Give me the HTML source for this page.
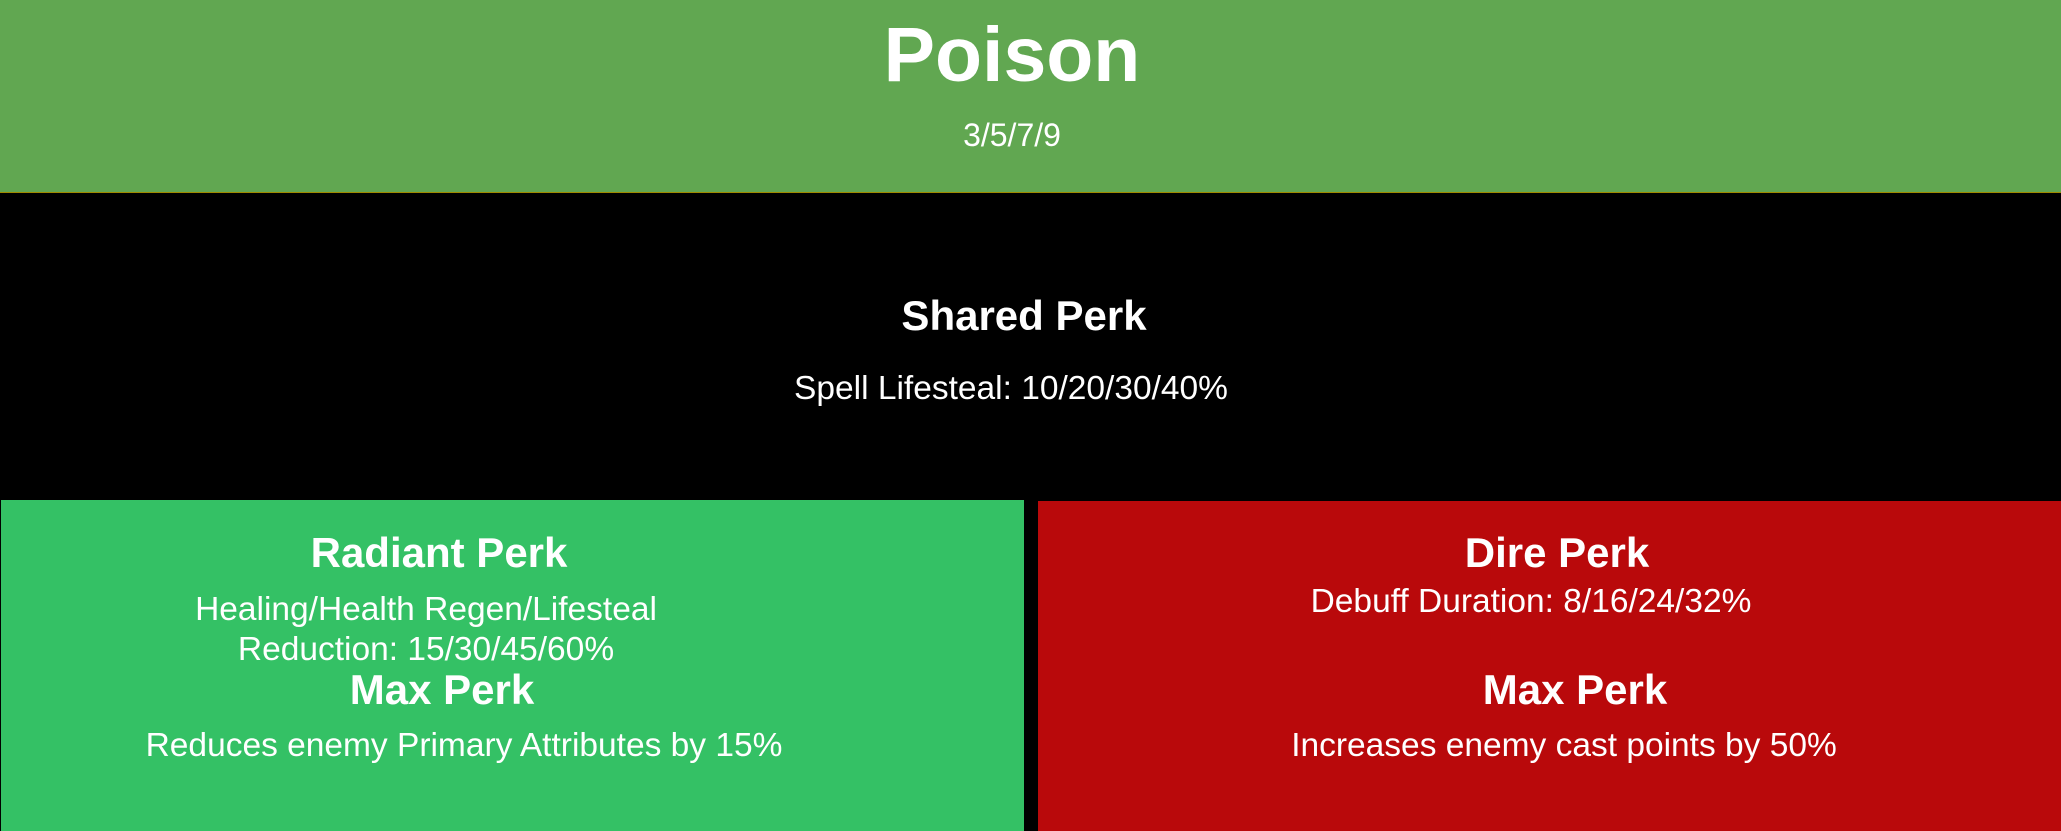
<!DOCTYPE html>
<html><head><meta charset="utf-8"><style>
html,body{margin:0;padding:0;width:2061px;height:831px;overflow:hidden;background:#000;font-family:"Liberation Sans",Arial,sans-serif;color:#fff}
.hdr{position:absolute;left:0;top:0;width:2061px;height:192px;background:#61a751;border-bottom:1px solid #a08a00}
.g{position:absolute;left:1px;top:500px;width:1023px;height:331px;background:#34c165}
.r{position:absolute;left:1038px;top:501px;width:1023px;height:330px;background:#b9090b}
.t{position:absolute;white-space:nowrap;transform:translateX(-50%);line-height:1.149}
.b{font-weight:bold}
</style></head><body>
<div class="hdr"></div>
<div class="g"></div>
<div class="r"></div>
<div class="t b" style="left:1012px;top:11px;font-size:77px">Poison</div>
<div class="t" style="left:1012px;top:117px;font-size:32px">3/5/7/9</div>
<div class="t b" style="left:1024px;top:292px;font-size:42px">Shared Perk</div>
<div class="t" style="left:1011px;top:370px;font-size:33.5px">Spell Lifesteal: 10/20/30/40%</div>

<div class="t b" style="left:439px;top:529px;font-size:42px">Radiant Perk</div>
<div class="t" style="left:426px;top:591px;font-size:33.5px">Healing/Health Regen/Lifesteal</div>
<div class="t" style="left:426px;top:631px;font-size:33.5px">Reduction: 15/30/45/60%</div>
<div class="t b" style="left:442px;top:666px;font-size:42px">Max Perk</div>
<div class="t" style="left:464px;top:727px;font-size:33.5px">Reduces enemy Primary Attributes by 15%</div>

<div class="t b" style="left:1557px;top:529px;font-size:42px">Dire Perk</div>
<div class="t" style="left:1531px;top:583px;font-size:33.5px">Debuff Duration: 8/16/24/32%</div>
<div class="t b" style="left:1575px;top:666px;font-size:42px">Max Perk</div>
<div class="t" style="left:1564px;top:727px;font-size:33.5px">Increases enemy cast points by 50%</div>
</body></html>
